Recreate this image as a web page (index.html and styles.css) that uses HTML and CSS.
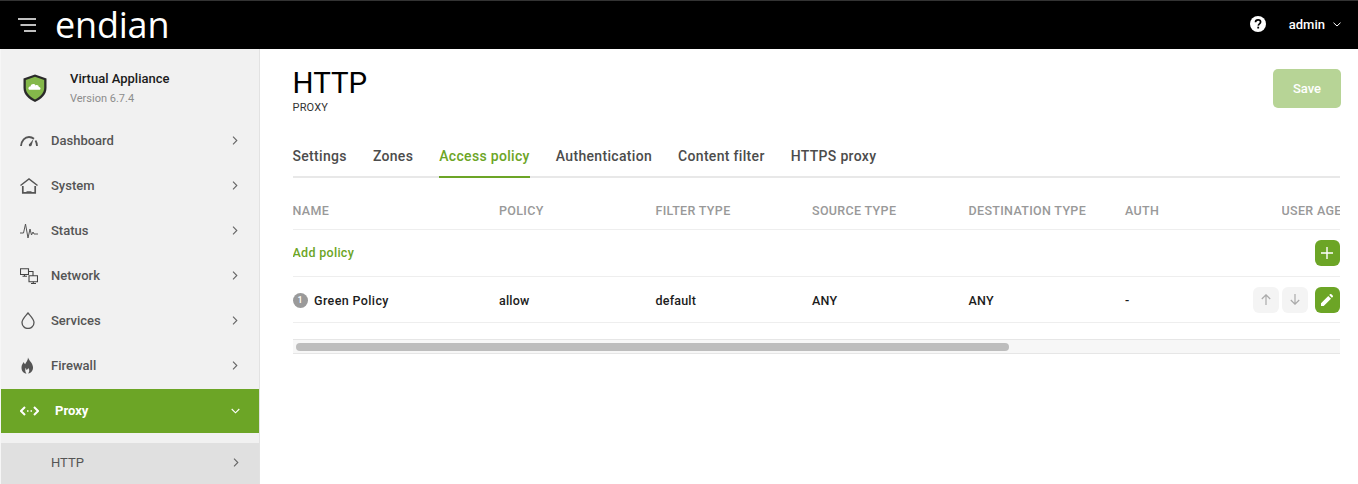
FILE: index.html
```html
<!DOCTYPE html>
<html lang="en">
<head>
<meta charset="utf-8">
<title>HTTP Proxy</title>
<link rel="stylesheet" href="styles.css">
</head>
<body>
<header class="topbar">
  <button class="burger" aria-label="Menu"><svg width="18" height="14" viewBox="0 0 18 14"><path d="M0 1h18M2.500 7h15.500M6 13h12" stroke="#fff" stroke-width="1.600" fill="none"/></svg></button>
  <span class="logo">endian</span>
  <div class="top-right">
    <svg class="help" width="16" height="16" viewBox="0 0 16 16"><circle cx="8" cy="8" r="8" fill="#fff"/><path d="M5.500 6.200c0-1.500 1.100-2.400 2.600-2.400s2.500.9 2.500 2.200c0 1.900-2.200 1.800-2.300 3.600" fill="none" stroke="#000" stroke-width="1.700"/><rect x="7.300" y="10.700" width="1.800" height="1.800" fill="#000"/></svg>
    <span class="user">admin</span>
    <svg width="8" height="5" viewBox="0 0 8 5"><path d="M.5.700 4 4l3.500-3.300" stroke="#fff" fill="none"/></svg>
  </div>
</header>
<div class="shell">
  <aside class="sidebar">
    <div class="brand">
      <svg class="shield" width="24" height="29" viewBox="0 0 24 29">
        <path d="M12 .5 23.500 4.500V14c0 6.500-5 11-11.500 14C5.500 25 .5 20.500.5 14V4.500Z" fill="#2a2a2a"/>
        <path d="M12 2.800 21.200 6V14c0 5-4 8.800-9.200 11.500C7 22.800 2.800 19 2.800 14V6Z" fill="#84b84a"/>
        <path d="M6.200 15.800c-1.500-1.500-.6-3.500 1.300-3.400.5-2.500 3.800-3.200 5.100-1 1.600-.8 3.300.2 3.200 1.700 1.800.1 2.300 1.900 1.100 2.700Z" fill="#fff"/>
      </svg>
      <div class="brand-text">
        <div class="brand-name">Virtual Appliance</div>
        <div class="brand-version">Version 6.7.4</div>
      </div>
    </div>
    <nav class="nav">
      <a class="nav-item"><span class="nav-icon"><svg width="18" height="12" viewBox="0 0 18 12"><path d="M1 11C1.500 5.500 5 2 9 2c2 0 3.500.6 5 1.800M15.500 5.500c.9 1.500 1.400 3.300 1.500 5.500" stroke="#555" stroke-width="1.800" fill="none"/><path d="M13.500 4 9.800 8.400a1.500 1.500 0 1 0 2 1.400Z" fill="#555"/></svg></span><span class="nav-label">Dashboard</span><svg class="chev" width="6" height="9" viewBox="0 0 6 9"><path d="M1 .7 4.800 4.500 1 8.300" stroke="#666" stroke-width="1.100" fill="none"/></svg></a>
      <a class="nav-item"><span class="nav-icon"><svg width="18" height="16" viewBox="0 0 18 16"><path d="M.5 7.500 9 1l8.500 6.500" stroke="#555" stroke-width="1.500" fill="none"/><path d="M2.800 8v6.800h12.400V8M6.500 14.200h5" stroke="#555" stroke-width="1.700" fill="none"/></svg></span><span class="nav-label">System</span><svg class="chev" width="6" height="9" viewBox="0 0 6 9"><path d="M1 .7 4.800 4.500 1 8.300" stroke="#666" stroke-width="1.100" fill="none"/></svg></a>
      <a class="nav-item"><span class="nav-icon"><svg width="18" height="16" viewBox="0 0 18 16"><path d="M0 10h3.500L5.500 1l2.500 14 2-9 1.500 6L13 9l1 2h4" stroke="#555" stroke-width="1" fill="none"/></svg></span><span class="nav-label">Status</span><svg class="chev" width="6" height="9" viewBox="0 0 6 9"><path d="M1 .7 4.800 4.500 1 8.300" stroke="#666" stroke-width="1.100" fill="none"/></svg></a>
      <a class="nav-item"><span class="nav-icon"><svg width="18" height="16" viewBox="0 0 18 16"><path d="M.5.700h8v5.800h-8zM9 7.700h8.500v6h-8.500zM2.500 8.200h4.500M8.500 3.500h4.500v4" stroke="#444" stroke-width="1.100" fill="none"/><path d="M4.500 6.500v1.500M13.300 13.700v1.800M11 15.500h5" stroke="#444" stroke-width="1.100"/></svg></span><span class="nav-label">Network</span><svg class="chev" width="6" height="9" viewBox="0 0 6 9"><path d="M1 .7 4.800 4.500 1 8.300" stroke="#666" stroke-width="1.100" fill="none"/></svg></a>
      <a class="nav-item"><span class="nav-icon"><svg width="18" height="17" viewBox="1 0 18 17"><path d="M9 1c2.500 3 6 6 6 9.500a6 6 0 0 1-12 0C3 7 6.500 4 9 1Z" stroke="#555" stroke-width="1.300" fill="none"/></svg></span><span class="nav-label">Services</span><svg class="chev" width="6" height="9" viewBox="0 0 6 9"><path d="M1 .7 4.800 4.500 1 8.300" stroke="#666" stroke-width="1.100" fill="none"/></svg></a>
      <a class="nav-item"><span class="nav-icon"><svg width="15" height="17" viewBox="2 0 14 17"><path d="M9.500.5c.8 3 4.500 5 5 9.500.3 3.500-2 6.500-5 6.500 1.500-1.500 1.800-3.300.3-5.500-.5 1.200-1 1.700-1.800 2-.2-1-.5-1.500-.8-2.200C6.500 12.500 6.500 15 8 16.500c-3 0-5-2.500-5-6 0-2.500 1.200-4 2.200-5.500.3 1 .7 1.700 1.400 2.200C7.500 5 9.500 3.500 9.500.5Z" fill="#555"/></svg></span><span class="nav-label">Firewall</span><svg class="chev" width="6" height="9" viewBox="0 0 6 9"><path d="M1 .7 4.800 4.500 1 8.300" stroke="#666" stroke-width="1.100" fill="none"/></svg></a>
      <a class="nav-item active"><span class="nav-icon"><svg width="19" height="10" viewBox="0 0 19 10"><path d="M5 1 1 5l4 4M14 1l4 4-4 4" stroke="#fff" stroke-width="2" fill="none"/><path d="M7 4.200h1.500v1.600H7zM10.500 4.200H12v1.600h-1.500z" fill="#fff"/></svg></span><span class="nav-label">Proxy</span><svg class="chev" width="9" height="6" viewBox="0 0 9 6"><path d="M.7 1 4.500 4.800 8.300 1" stroke="#fff" stroke-width="1.100" fill="none"/></svg></a>
      <a class="nav-sub"><span class="nav-sub-label">HTTP</span><svg class="chev" width="6" height="9" viewBox="0 0 6 9"><path d="M1 .7 4.800 4.500 1 8.300" stroke="#666" stroke-width="1.100" fill="none"/></svg></a>
    </nav>
  </aside>
  <main class="content">
    <div class="page-head">
      <div>
        <h1 class="title">HTTP</h1>
        <div class="subtitle">PROXY</div>
      </div>
      <button class="save">Save</button>
    </div>
    <div class="tabs">
      <a class="tab">Settings</a>
      <a class="tab">Zones</a>
      <a class="tab tab-active">Access policy</a>
      <a class="tab">Authentication</a>
      <a class="tab">Content filter</a>
      <a class="tab">HTTPS proxy</a>
    </div>
    <div class="table">
      <div class="row head">
        <div>NAME</div><div>POLICY</div><div>FILTER TYPE</div><div>SOURCE TYPE</div><div>DESTINATION TYPE</div><div>AUTH</div><div class="clip">USER AGENT</div>
      </div>
      <div class="add-row">
        <a class="add-link">Add policy</a>
        <button class="btn green end"><svg width="12" height="12" viewBox="0 0 12 12"><path d="M6 0v12M0 6h12" stroke="#fff" stroke-width="1.400"/></svg></button>
      </div>
      <div class="row body">
        <div class="name-cell"><span class="badge">1</span>Green Policy</div>
        <div>allow</div><div>default</div><div>ANY</div><div>ANY</div><div>-</div>
        <div class="actions">
          <button class="btn grey"><svg width="10" height="11" viewBox="0 0 10 11"><path d="M5 11V1M.8 5 5 .8 9.200 5" stroke="#aaa" stroke-width="1.200" fill="none"/></svg></button>
          <button class="btn grey"><svg width="10" height="11" viewBox="0 0 10 11"><path d="M5 0v10M.8 6 5 10.200 9.200 6" stroke="#aaa" stroke-width="1.200" fill="none"/></svg></button>
          <button class="btn green end edit"><svg width="12" height="12" viewBox="0 0 12 12"><path d="M0 12V9.300L7.300 2l2.700 2.700L2.700 12ZM8.200 1.100 9 .3a1 1 0 0 1 1.400 0l1.300 1.300a1 1 0 0 1 0 1.400l-.8.800Z" fill="#fff"/></svg></button>
        </div>
      </div>
      <div class="scrollbar"><div class="thumb"></div></div>
    </div>
  </main>
</div>
</body>
</html>
```

FILE: styles.css
```css
* { box-sizing: border-box; }
html, body { margin: 0; padding: 0; height: 484px; overflow: hidden; background: #fff; font-family: Roboto, "Liberation Sans", sans-serif; color: #222; }
button { font-family: inherit; border: 0; padding: 0; }
.topbar { height: 49px; background: #000; display: flex; align-items: center; padding: 0 17px 0 18px; border-top: 1px solid #333; }
.burger { background: none; display: flex; width: 18px; height: 14px; margin-right: 19px; }
.logo { color: #fff; font-family: "Open Sans", sans-serif; font-size: 36px; font-weight: 500; line-height: 48px; letter-spacing: -.2px; padding-bottom: 6px; height: 48px; }
.top-right { margin-left: auto; display: flex; align-items: center; color: #fff; margin-top: -2px; }
.help { margin-right: 23px; }
.user { font-size: 13px; font-weight: 500; margin-right: 8px; }
.shell { display: flex; height: 435px; }
.sidebar { width: 260px; flex: none; background: #f1f1f1; border-right: 1px solid #e2e2e2; border-left: 1px solid #f6f6f6; overflow: hidden; }
.brand { height: 69px; display: flex; align-items: center; padding-left: 22px; padding-top: 11px; }
.shield { flex: none; margin-right: 23px; margin-top: -2px; }
.brand-name { font-size: 13px; font-weight: 500; color: #1b1b1b; line-height: 16px; }
.brand-version { font-size: 11px; color: #8d8d8d; line-height: 16px; margin-top: 4px; }
.nav { display: flex; flex-direction: column; }
.nav-item { height: 45px; display: flex; align-items: center; padding-right: 21px; color: #555; }
.nav-icon { width: 50px; padding-left: 19px; display: flex; flex: none; }
.nav-label { font-size: 13px; font-weight: 500; flex: 1; }
.active { background: #6ca526; color: #fff; height: 44px; margin: 1px 0 10px; }
.active .nav-label { font-weight: 700; padding: 0 0 2px 4px; }
.active .chev { margin-right: -1.500px; }
.nav-sub { height: 41px; background: #e0e0e0; display: flex; align-items: center; padding: 0 20px 2px 50px; color: #555; }
.nav-sub-label { flex: 1; font-size: 13px; }
.content { flex: 1; min-width: 0; padding: 0 17px 0 32.500px; }
.page-head { display: flex; justify-content: space-between; align-items: flex-start; padding-top: 20px; height: 88px; }
.title { margin: 0; font-size: 29.500px; font-weight: 400; line-height: 28px; color: #000; }
.subtitle { font-size: 11px; font-weight: 400; color: #333; margin-top: 4px; line-height: 14px; letter-spacing: .2px; }
.save { width: 68px; height: 39px; background: #b7d496; color: #fff; border-radius: 5px; font-size: 13px; font-weight: 500; }
.tabs { display: flex; gap: 26px; border-bottom: 2px solid #e8e8e8; height: 41px; width: 1047.500px; }
.tab { font-size: 14px; font-weight: 500; color: #4c4c4c; height: 41px; line-height: 38px; letter-spacing: .32px; }
.tab-active { color: #6ca526; border-bottom: 2px solid #6ca526; }
.table { width: 1047.500px; overflow: hidden; }
.row { display: grid; grid-template-columns: 206.500px 156.500px 156.500px 156.500px 156.500px 156.500px 58.500px; align-items: center; }
.head { height: 52px; color: #999; border-bottom: 1px solid #eee; font-size: 12.500px; font-weight: 500; letter-spacing: .33px; padding-top: 14px; }
.clip { white-space: nowrap; overflow: hidden; }
.add-row { height: 47px; display: flex; justify-content: space-between; align-items: center; border-bottom: 1px solid #eee; }
.add-link { font-size: 12.500px; font-weight: 500; color: #6ca526; letter-spacing: .3px; padding-bottom: 2px; }
.body { height: 46px; border-bottom: 1px solid #eee; color: #1c1c1c; font-size: 12.500px; font-weight: 500; letter-spacing: .2px; padding-top: 1px; }
.name-cell { display: flex; align-items: center; letter-spacing: .38px; }
.badge { width: 15px; height: 15px; border-radius: 50%; background: #9a9a9a; color: #fff; font-size: 9px; line-height: 15px; text-align: center; margin-right: 6.500px; font-weight: 500; letter-spacing: 0; }
.btn { width: 26px; height: 26px; border-radius: 6px; display: flex; align-items: center; justify-content: center; flex: none; }
.end { width: 25.500px; }
.green { background: #6ca526; }
.grey { background: #f4f4f4; }
.actions { display: flex; justify-content: flex-end; gap: 3px; margin-top: -1px; }
.edit { margin-left: 4px; }
.scrollbar { height: 15px; margin-top: 16px; background: #f7f7f7; border-top: 1px solid #e6e6e6; border-bottom: 1px solid #e6e6e6; padding: 3px 3.500px; width: 1048.500px; }
.thumb { width: 713px; height: 8px; border-radius: 4px; background: #bdbdbd; }
```
